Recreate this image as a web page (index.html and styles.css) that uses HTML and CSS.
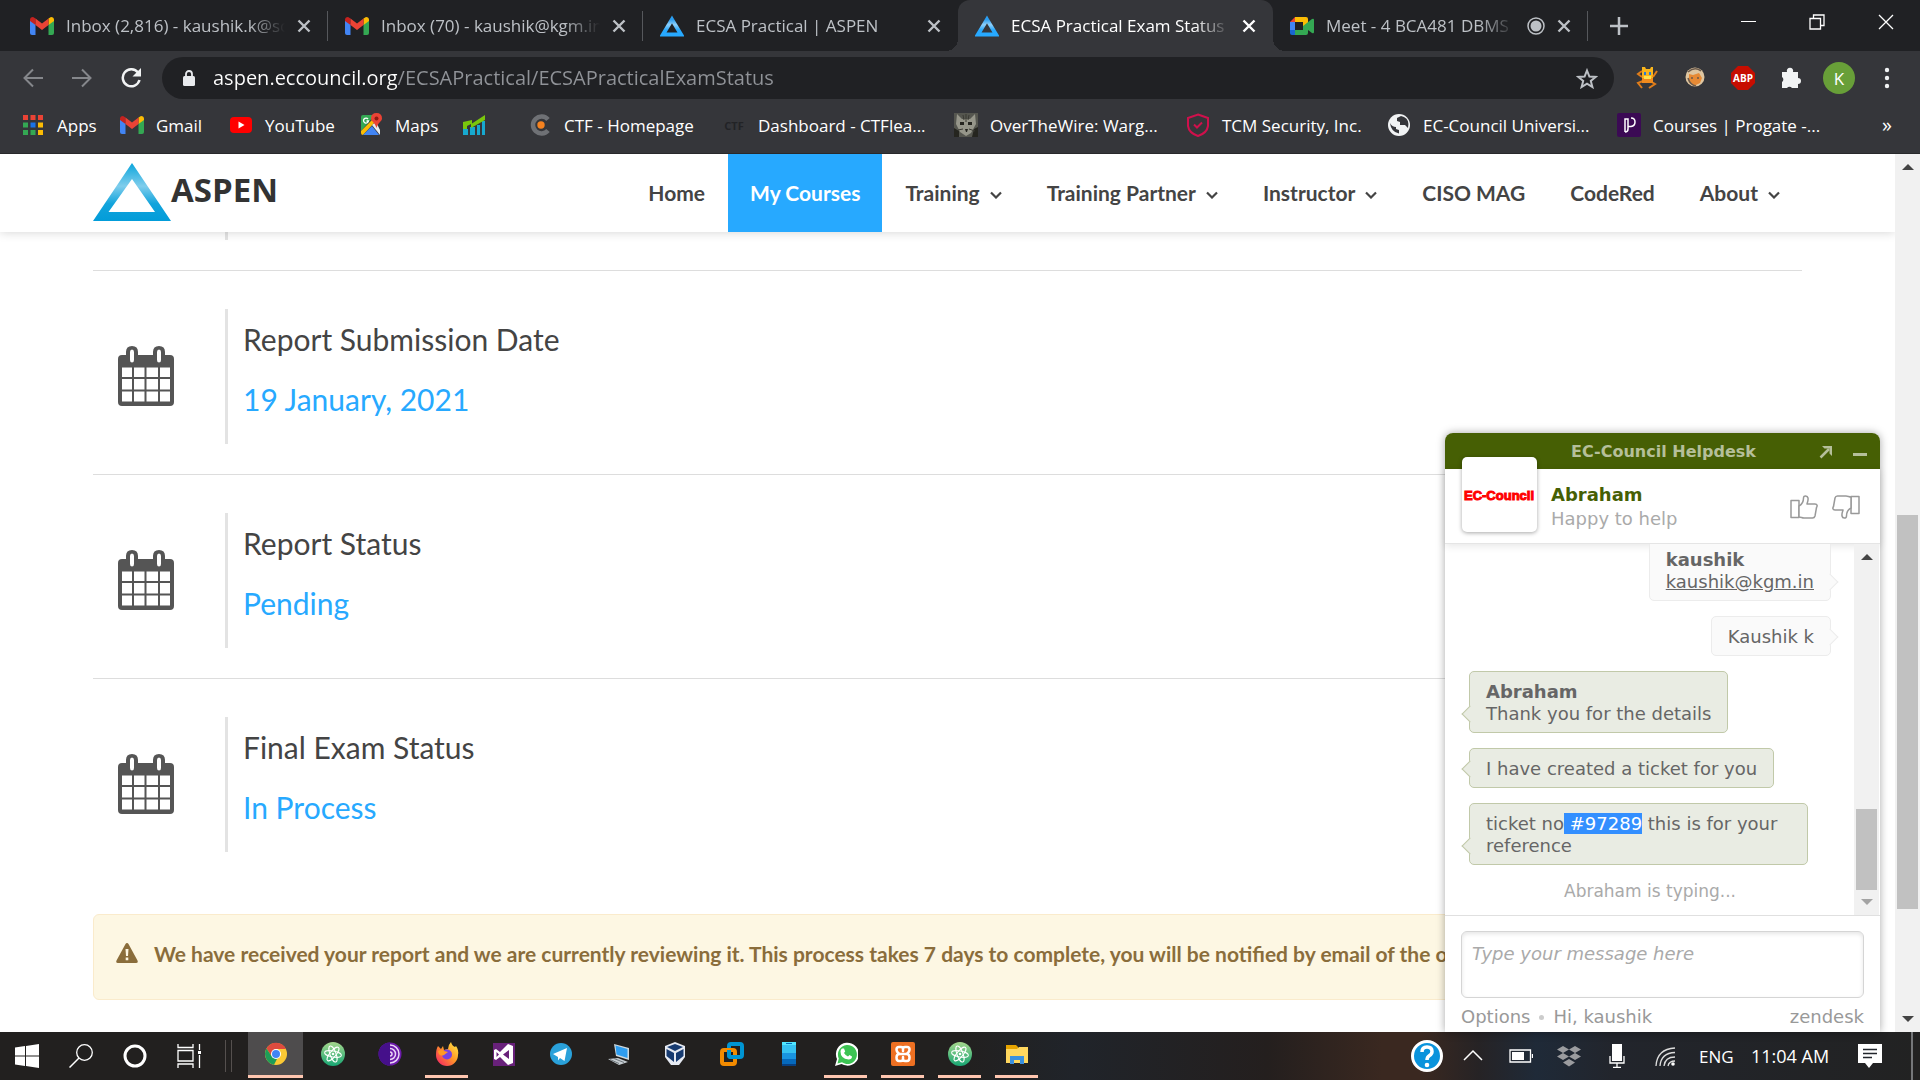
FILE: index.html
```html
<!DOCTYPE html>
<html lang="en">
<head>
<meta charset="utf-8">
<title>ECSA Practical Exam Status</title>
<link rel="stylesheet" href="styles.css">
</head>
<body>
<svg class="defs" aria-hidden="true">
  <defs>
    <linearGradient id="g-tri" x1="0" y1="0" x2="0" y2="1"><stop offset="0" stop-color="#0aa5dc"/><stop offset=".4" stop-color="#7fcdec"/><stop offset=".7" stop-color="#12a4dc"/><stop offset="1" stop-color="#029cd9"/></linearGradient>
    <linearGradient id="g-fav" x1="0" y1="0" x2="0" y2="1"><stop offset="0" stop-color="#2a9df0"/><stop offset=".35" stop-color="#8fd0fa"/><stop offset=".7" stop-color="#27a9ff"/></linearGradient>
    <linearGradient id="g-atom" x1="0" y1="0" x2="0" y2="1"><stop offset="0" stop-color="#a5d68c"/><stop offset="1" stop-color="#17a673"/></linearGradient>
    <linearGradient id="g-fox" x1="1" y1="0" x2="0" y2="1"><stop offset="0" stop-color="#fff04a"/><stop offset=".45" stop-color="#ff9a26"/><stop offset="1" stop-color="#f5156c"/></linearGradient>
    <symbol id="gmail" viewBox="0 0 24 18"><path fill="#4285f4" d="M0 3v13q0 2 2 2h3.500V7z"/><path fill="#34a853" d="M24 3v13q0 2-2 2h-3.500V7z"/><path fill="#c5221f" d="M0 3q0-3 3-3l2.500 1.500V8L0 4z"/><path fill="#fbbc04" d="M24 3q0-3-3-3l-2.500 1.500V8L24 4z"/><path fill="#ea4335" d="M5.500 1.500 12 6.500l6.500-5V8L12 13 5.500 8z"/></symbol>
    <symbol id="tri" viewBox="0 0 24 22"><path fill="none" stroke="url(#g-fav)" stroke-width="4" d="M12 4.500 21 19.500H3z"/></symbol>
    <symbol id="close" viewBox="0 0 14 14"><path fill="none" stroke="currentColor" stroke-width="2.400" d="m1.500 1.500 11 11m0-11-11 11"/></symbol>
    <symbol id="chev" viewBox="0 0 12 8"><path fill="none" stroke="currentColor" stroke-width="2.200" d="m1 1.500 5 5 5-5"/></symbol>
    <symbol id="cal" viewBox="0 0 56 60"><path fill="#555" fill-rule="evenodd" d="M4 9h4V6q0-6 6-6t6 6v3h15V6q0-6 6-6t6 6v3h5q4 0 4 4v43q0 4-4 4H4q-4 0-4-4V13q0-4 4-4zM12 6v8q0 2.500 2 2.500t2-2.500V6q0-2.500-2-2.500T12 6zm27 0v8q0 2.500 2 2.500t2-2.500V6q0-2.500-2-2.500T39 6zM4 21.500v9.500h10v-9.500zm12 0v9.500h10.500v-9.500zm12.500 0v9.500H40v-9.500zm13.500 0v9.500h10v-9.500zM4 33v10.500h10V33zm12 0v10.500h10.500V33zm12.500 0v10.500H40V33zM42 33v10.500h10V33zM4 45.500v10h10v-10zm12 0v10h10.500v-10zm12.500 0v10H40v-10zm13.500 0v10h10v-10z"/></symbol>
    <symbol id="atom" viewBox="0 0 24 24"><circle cx="12" cy="12" r="12" fill="url(#g-atom)"/><g fill="none" stroke="#fff"><ellipse cx="12" cy="12" rx="3" ry="8.500" transform="rotate(-20 12 12)"/><ellipse cx="12" cy="12" rx="3" ry="8.500" transform="rotate(40 12 12)"/><ellipse cx="12" cy="12" rx="3" ry="8.500" transform="rotate(100 12 12)"/></g><circle cx="12" cy="12" r="1.300" fill="#fff"/></symbol>
    <symbol id="thumb" viewBox="0 0 28 24"><g fill="#fff" stroke="#999" stroke-width="1.500" stroke-linejoin="round"><path d="M1 5.500h8v17H1z"/><path d="M9 11c3-1.500 4.500-4 4.500-8 0-3 4-2.500 4.500 0 .4 2.500-.5 4-1 6h8c2.500 0 2.500 2 1.500 3.500L25 21c-.4 1.400-1 2-2.500 2H14c-2 0-3-1-5-1z"/></g></symbol>
  </defs>
</svg>

<header class="tabs">
  <div class="tab"><svg class="fav short"><use href="#gmail"/></svg><span class="tab-title">Inbox (2,816) - kaushik.k@sc</span><button class="tab-close" aria-label="Close tab"><svg><use href="#close"/></svg></button></div>
  <div class="tab"><svg class="fav short"><use href="#gmail"/></svg><span class="tab-title">Inbox (70) - kaushik@kgm.in</span><button class="tab-close" aria-label="Close tab"><svg><use href="#close"/></svg></button></div>
  <div class="tab plain"><svg class="fav"><use href="#tri"/></svg><span class="tab-title">ECSA Practical | ASPEN</span><button class="tab-close" aria-label="Close tab"><svg><use href="#close"/></svg></button></div>
  <div class="tab active"><svg class="fav"><use href="#tri"/></svg><span class="tab-title">ECSA Practical Exam Status</span><button class="tab-close" aria-label="Close tab"><svg><use href="#close"/></svg></button></div>
  <div class="tab"><svg class="fav short" viewBox="0 0 24 18"><path fill="#ea4335" d="M0 5 5 0v5z"/><path fill="#4285f4" d="M0 5h5v8H0z"/><path fill="#1967d2" d="M0 13h5v5H2q-2 0-2-2z"/><path fill="#fbbc04" d="M5 0h11q2 0 2 2v6l-5 2V5H5z"/><path fill="#34a853" d="M5 13h8V9l9-7q2-1 2 1v12q0 2-2 1l-4-3v3q0 2-2 2H5z"/></svg><span class="tab-title">Meet - 4 BCA481 DBMS</span><svg class="audio" viewBox="0 0 18 18"><circle cx="9" cy="9" r="8" fill="none" stroke="#bdc1c6" stroke-width="1.500"/><circle cx="9" cy="9" r="5.500" fill="#bdc1c6"/></svg><button class="tab-close" aria-label="Close tab"><svg><use href="#close"/></svg></button></div>
  <button class="new-tab" aria-label="New tab"><svg viewBox="0 0 18 18"><path stroke="#bdc1c6" stroke-width="2.500" d="M9 0v18M0 9h18"/></svg></button>
  <div class="window-buttons">
    <button aria-label="Minimize"><svg viewBox="0 0 16 16"><path stroke="#fff" d="M1 7.500h15"/></svg></button>
    <button aria-label="Restore"><svg viewBox="0 0 16 16"><path fill="none" stroke="#fff" stroke-width="1.300" d="M1 4.500h10.500V15H1zM4.500 4.500V1H15v10.500h-3.500"/></svg></button>
    <button aria-label="Close window"><svg viewBox="0 0 16 16"><path stroke="#fff" stroke-width="1.300" d="m1 1 14 14m0-14L1 15"/></svg></button>
  </div>
</header>

<div class="toolbar">
  <button class="nav-btn" aria-label="Back"><svg viewBox="0 0 22 20"><path fill="none" stroke="#85878b" stroke-width="2" d="M21 10H3m8-8.500L2.500 10l8.500 8.500"/></svg></button>
  <button class="nav-btn" aria-label="Forward"><svg viewBox="0 0 22 20"><path fill="none" stroke="#85878b" stroke-width="2" d="M1 10h18m-8-8.500 8.500 8.500-8.500 8.500"/></svg></button>
  <button class="nav-btn" aria-label="Reload"><svg viewBox="0 0 22 20"><path fill="none" stroke="#f1f3f4" stroke-width="2.500" d="M18 4.500A8.500 8.500 0 1 0 19.500 12"/><path fill="#f1f3f4" d="M21 0v8.500h-8.500z"/></svg></button>
  <div class="omnibox">
    <svg class="lock" viewBox="0 0 12 16"><rect y="6" width="12" height="10" rx="1.500" fill="#e8eaed"/><path fill="none" stroke="#e8eaed" stroke-width="1.800" d="M3 7V4a3 3 0 0 1 6 0v3"/></svg>
    <input class="url" aria-label="Address" value="aspen.eccouncil.org/ECSAPractical/ECSAPracticalExamStatus">
    <button aria-label="Bookmark this page"><svg class="star" viewBox="0 0 22 21"><path fill="none" stroke="#bdc1c6" stroke-width="2" d="m11 2.500 2.400 6 6.300.4-4.900 4 1.600 6.100-5.400-3.400L5.600 19l1.600-6.100-4.900-4 6.300-.4z"/></svg></button>
  </div>
  <div class="extensions">
    <button aria-label="Cat extension"><svg viewBox="0 0 24 24"><path fill="#f9b51c" d="M7 1h3l1 2h4l1-2h2v12H7z"/><path fill="none" stroke="#e07d1a" stroke-width="2" d="M7 5 3 8l4 3m11 0 4-6M8 15l-5 2 4 5m8-7 5 3-6 4"/><path fill="#f08a1d" d="M7 12h11v5H7z"/><path fill="#2b7bd1" d="M9 6h2v3H9zm5 0h2v3h-2z"/><path fill="#ffe14d" d="M9 10h7v3H9z"/></svg></button>
    <button aria-label="Cookie extension"><svg viewBox="0 0 24 24"><circle cx="12" cy="11" r="9.500" fill="#dfc6a0"/><path fill="#e68a35" d="m6 8 4 1 6-2 3 5-2 5-6 3-5-4z"/><path fill="none" stroke="#6b5a4b" stroke-width="1.500" d="M5 6q7-6 13-1M5 12q2 7 8 8m-5-8h2m4 0h2"/></svg></button>
    <button aria-label="Adblock Plus"><svg class="abp" viewBox="0 0 24 24"><path fill="#c70d00" d="M7 0h10l7 7v10l-7 7H7l-7-7V7z"/><text x="12" y="16" text-anchor="middle">ABP</text></svg></button>
    <button aria-label="Extensions"><svg viewBox="0 0 24 24"><path fill="#f1f3f4" d="M3 6h5a3.200 3.200 0 1 1 6 0h5v6a3 3 0 1 1 0 6v4h-6a3 3 0 0 0-5 0H3v-6a3 3 0 0 0 0-5z"/></svg></button>
    <button class="avatar" aria-label="Profile">K</button>
    <button aria-label="Menu"><svg viewBox="0 0 24 24"><g fill="#f1f3f4"><circle cx="12" cy="4" r="2.200"/><circle cx="12" cy="12" r="2.200"/><circle cx="12" cy="20" r="2.200"/></g></svg></button>
  </div>
</div>

<nav class="bookmarks" aria-label="Bookmarks">
  <a href="#"><svg viewBox="0 0 24 24"><path fill="#ea4335" d="M2 2h5v5H2zm7.500 0h5v5h-5zM17 2h5v5h-5z"/><path fill="#34a853" d="M2 9.500h5v5H2zM2 17h5v5H2zm7.500 0h5v5h-5z"/><path fill="#1a73e8" d="M9.500 9.500h5v5h-5z"/><path fill="#fbbc04" d="M17 9.500h5v5h-5zm0 7.500h5v5h-5z"/></svg>Apps</a>
  <a href="#"><svg><use href="#gmail" y="3" height="18" width="24"/></svg>Gmail</a>
  <a href="#"><svg viewBox="0 0 24 24"><rect y="4" x="1" width="22" height="16" rx="4" fill="red"/><path fill="#fff" d="M9.500 8.500v7l6-3.500z"/></svg>YouTube</a>
  <a href="#"><svg viewBox="0 0 24 24"><path fill="#34a853" d="M2 4q0-2 2-2h12L2 18z"/><path fill="#fbbc04" d="m2 18 14-14v5L4 22q-2 0-2-2z"/><path fill="#4285f4" d="m4 22 9-9 7 9z"/><path fill="#e8eaed" d="m13 12 4-3 4 8v5z"/><path fill="#ea4335" d="M17.500 0Q23 0 23 5.500c0 3-4 4-5.500 9.500C16 9.500 12 8.500 12 5.500Q12 0 17.500 0z"/><circle cx="17.500" cy="5.500" r="2" fill="#8e1b12"/><path fill="none" stroke="#fff" stroke-width="1.300" d="M9 6a2.500 2.500 0 1 0 .5 2H7.500"/></svg>Maps</a>
  <a href="#" aria-label="Analytics"><svg viewBox="0 0 24 24"><path fill="#17a9cf" d="M1 16h5v6H1zm7-2h5v8H8zm7-2h3v10h-3zm5-4h3v14h-3z"/><path fill="#7ac70c" d="M1 9l9-2v3.500L23 2v5L9 15v-4l-4 2v3H1z"/></svg></a>
  <a href="#"><svg viewBox="0 0 24 24"><path fill="none" stroke="#6f7175" stroke-width="4.500" d="M20 6.500a8.500 8.500 0 1 0 0 11"/><circle cx="13" cy="12" r="3.700" fill="#f5821f"/></svg>CTF - Homepage</a>
  <a href="#"><svg class="ctf" viewBox="0 0 24 24"><text x="12" y="17" text-anchor="middle">CTF</text></svg>Dashboard - CTFlea...</a>
  <a href="#"><svg viewBox="0 0 24 24"><path fill="#55564f" d="M0 0h24v24H0z"/><path fill="#96968a" d="m3 1 5 5h8l5-5 1 10-5 9-5 3-6-4-4-8z"/><path fill="#25251f" d="M6 9h4v3H6zm8 0h4v3h-4zm-3 7h3l-1 3h-1zM0 15l5 3v6H0zm20 1 4-2v10h-6z"/><path stroke="#3a3a33" d="M12 1v8M9 2l1 5m5-5-1 5M4 17l5-1m6 0 6 2"/></svg>OverTheWire: Warg...</a>
  <a href="#"><svg viewBox="0 0 24 24"><path fill="none" stroke="#d0104c" stroke-width="2" d="M12 1.500 22 5v8q-1 7-10 10Q3 20 2 13V5z"/><path fill="none" stroke="#d0104c" stroke-width="2" d="m8 11.500 3 3 5-5"/></svg>TCM Security, Inc.</a>
  <a href="#"><svg viewBox="0 0 24 24"><circle cx="12" cy="12" r="11" fill="#f1f3f4"/><path fill="#35363a" d="M3 10q2 4 6 4v2l3 1v3.500Q4 19 3 10zm11-7-4 2v3l3 1v3h5l3 3q2-8-4-11z"/></svg>EC-Council Universi...</a>
  <a href="#"><svg viewBox="0 0 24 24"><rect width="24" height="24" rx="2" fill="#3b0a54"/><path fill="none" stroke="#fff" stroke-width="1.500" d="M8 19V6h3v10q0 3-3 3m6-14q4 0 4 4t-4 4.500h-3"/></svg>Courses | Progate -...</a>
  <button class="more" aria-label="More bookmarks">»</button>
</nav>

<div class="page">
  <div class="view">
    <header class="site-header">
      <a class="brand" href="#"><svg viewBox="0 0 78 58"><path fill="url(#g-tri)" fill-rule="evenodd" d="M39 0 78 58H0zm0 16L15.500 49h46.500z"/></svg>ASPEN</a>
      <nav class="site-nav">
        <a href="#">Home</a>
        <a href="#" class="current">My Courses</a>
        <a href="#">Training<svg><use href="#chev"/></svg></a>
        <a href="#">Training Partner<svg><use href="#chev"/></svg></a>
        <a href="#">Instructor<svg><use href="#chev"/></svg></a>
        <a href="#">CISO MAG</a>
        <a href="#">CodeRed</a>
        <a href="#">About<svg><use href="#chev"/></svg></a>
      </nav>
    </header>
    <main class="content">
      <div class="row-tail"></div>
      <section class="status"><svg><use href="#cal"/></svg><div class="status-text"><h2>Report Submission Date</h2><p>19 January, 2021</p></div></section>
      <section class="status"><svg><use href="#cal"/></svg><div class="status-text"><h2>Report Status</h2><p>Pending</p></div></section>
      <section class="status"><svg><use href="#cal"/></svg><div class="status-text"><h2>Final Exam Status</h2><p>In Process</p></div></section>
      <div class="alert" role="alert"><svg viewBox="0 0 22 20"><path fill="#8a6d3b" fill-rule="evenodd" d="M11 0q1 0 1.500 1l9 16.500q1 2.500-1.500 2.500H2Q-.500 20 .500 17.500L9.500 1Q10 0 11 0zM9.500 6l.5 7h2l.5-7zm.2 8.500v2.800h2.600v-2.800z"/></svg>We have received your report and we are currently reviewing it. This process takes 7 days to complete, you will be notified by email of the outcome.</div>
    </main>
  </div>
  <div class="scrollbar page-scroll"><i class="arrow up"></i><i class="thumb"></i><i class="arrow down"></i></div>

  <aside class="chat" aria-label="EC-Council Helpdesk">
    <header class="chat-head"><span>EC-Council Helpdesk</span>
      <button aria-label="Pop out"><svg viewBox="0 0 14 14"><path fill="none" stroke="#b5bf9a" stroke-width="2.500" d="M1.500 12.500 10 4"/><path fill="#b5bf9a" d="M3 1h10v10l-2.500-2.500V3.500H5.500z"/></svg></button>
      <button aria-label="Minimize chat"><svg viewBox="0 0 14 14"><path fill="#b5bf9a" d="M0 8h14v3H0z"/></svg></button>
    </header>
    <div class="agent">
      <div class="agent-logo"><svg class="logo" viewBox="0 0 75 75"><text x="37" y="43" text-anchor="middle">EC-Council</text></svg></div>
      <div class="agent-name"><strong>Abraham</strong><span>Happy to help</span></div>
      <button aria-label="Good"><svg class="rate"><use href="#thumb"/></svg></button>
      <button aria-label="Bad" class="bad"><svg class="rate"><use href="#thumb"/></svg></button>
    </div>
    <div class="log">
      <div class="messages">
        <div class="msg me"><strong>kaushik</strong><a href="#">kaushik@kgm.in</a></div>
        <div class="msg me">Kaushik k</div>
        <div class="msg"><strong>Abraham</strong>Thank you for the details</div>
        <div class="msg">I have created a ticket for you</div>
        <div class="msg">ticket no<mark> #97289</mark> this is for your reference</div>
        <p class="typing">Abraham is typing...</p>
      </div>
      <div class="scrollbar log-scroll"><i class="arrow up"></i><i class="thumb"></i><i class="arrow down faint"></i></div>
    </div>
    <div class="compose">
      <textarea aria-label="Message" placeholder="Type your message here"></textarea>
      <div class="chat-foot"><a href="#">Options</a><i class="dot"></i><a href="#">Hi, kaushik</a><a href="#" class="zen">zendesk</a></div>
    </div>
  </aside>
</div>

<footer class="taskbar">
  <div class="system">
    <button aria-label="Start"><svg viewBox="0 0 24 24"><path fill="#fff" d="M0 3.500 10 2v9.500H0zM11 2l13-2v11.500H11zM0 12.500h10V22L0 20.500zm11 0h13V24l-13-2z"/></svg></button>
    <button aria-label="Search"><svg viewBox="0 0 24 24"><circle cx="15.500" cy="8.500" r="7.800" fill="none" stroke="#fff" stroke-width="1.300"/><path stroke="#fff" stroke-width="1.500" d="M10 14 .500 23.500"/></svg></button>
    <button aria-label="Cortana"><svg viewBox="0 0 24 24"><circle cx="12" cy="12" r="10" fill="none" stroke="#fff" stroke-width="3"/></svg></button>
    <button aria-label="Task View"><svg viewBox="0 0 24 24"><path fill="none" stroke="#fff" stroke-width="1.300" d="M1 0v3.500h15V0M1 6.500h15v10.500H1zM1 24v-4h15v4M22.500 0v6m0 5v13"/><path fill="#fff" d="M21 7h3v3h-3z"/></svg></button>
  </div>
  <div class="apps">
    <button class="open focus" aria-label="Chrome"><svg viewBox="0 0 24 24"><circle cx="12" cy="12" r="11" fill="#fbc934"/><path fill="#dd4b3e" d="M2.500 6.500A11 11 0 0 1 22 7H12L7.500 14z"/><path fill="#1e9d58" d="M2.500 6.500 7.500 14l6 2L10 22.800A11 11 0 0 1 2.500 6.500z"/><circle cx="12" cy="12" r="5" fill="#fff"/><circle cx="12" cy="12" r="4" fill="#4285f4"/></svg></button>
    <button aria-label="Atom"><svg><use href="#atom"/></svg></button>
    <button aria-label="Tor Browser"><svg viewBox="0 0 24 24"><circle cx="12" cy="12" r="11.500" fill="#6d1bab"/><path fill="#45108a" d="M12 .500a11.500 11.500 0 0 0 0 23z"/><path fill="none" stroke="#e9d5f5" stroke-width="1.500" d="M12 3a9 9 0 0 1 0 18m0-14.500a5.500 5.500 0 0 1 0 11m0-7.500a2 2 0 0 1 0 4"/></svg></button>
    <button class="open" aria-label="Firefox"><svg viewBox="0 0 24 24"><path fill="url(#g-fox)" d="M3 4l3 3 2-3 1 4 4-1q0-4 3-7 1 4 4 5l1-1q3 4 2 9a11 11 0 0 1-22 0Q1 7 3 4z"/><circle cx="12" cy="12.500" r="5" fill="#7542e5"/><path fill="#ff9a26" d="M3 9q4-2 6 0l4 1-4 3q-5 2-6-4z"/></svg></button>
    <button aria-label="Visual Studio"><svg viewBox="0 0 24 24"><path fill="#68217a" d="M1 1h22v23H1z"/><path fill="#fff" fill-rule="evenodd" d="M2 8l2-1 4 3 8-8 5 2v17l-5 2-8-8-4 3-2-1zm2.500 2v5L7 12.500zM17 8l-6 4.500 6 4.500z"/></svg></button>
    <button aria-label="Telegram"><svg viewBox="0 0 24 24"><circle cx="12" cy="12" r="11" fill="#2aa1da"/><path fill="#fff" d="m4 12 14-6-2.500 13-4.500-3-2 2.500V15z"/></svg></button>
    <button aria-label="Remote Desktop"><svg viewBox="0 0 24 24"><path fill="#cfd8dc" d="m8 2 15 4v12L10 14z"/><path fill="#2e9df0" d="m9.500 3.500 12 3.500v9l-11-3.500z"/><path fill="#c5ccd1" d="m2 17 10-1 10 4-9 3z"/><path stroke="#6f777c" d="m4 17.500 9 4m-5-5 10 4"/></svg></button>
    <button aria-label="VirtualBox"><svg viewBox="0 0 24 24"><path fill="#e6eaf2" d="m12 0 10 4v11l-6 8H8l-6-8V4z"/><path fill="#163a70" d="m12 2 8 3-8 4-8-4zM3.500 7 11 11v9l-7.500-6zm17 0L13 11v9l7.500-6z"/></svg></button>
    <button aria-label="VMware"><svg viewBox="0 0 24 24"><rect x="9" y="2" width="13" height="13" rx="2" fill="none" stroke="#0095d3" stroke-width="4"/><rect x="2" y="8" width="13" height="14" rx="2" fill="none" stroke="#f38b00" stroke-width="4"/><path fill="none" stroke="#0095d3" stroke-width="4" d="M9 8v5q0 2 2 2h6"/></svg></button>
    <button aria-label="Your Phone"><svg viewBox="0 0 24 24"><path fill="#35c1f1" d="M5 0h14v24H5z"/><path fill="#50e6ff" d="M5 0h14v3H5z"/><path fill="#1994e0" d="M5 11h14v13H5z"/><path fill="#0669bc" d="M5 17h14v7H5z"/><path fill="#083f80" d="M5 22h14v2H5z"/><path stroke="#0669bc" d="M9 1.500h6"/></svg></button>
    <button class="open" aria-label="WhatsApp"><svg viewBox="0 0 24 24"><path fill="#fff" d="m1 24 2-7A11.500 11.500 0 1 1 7.500 22z"/><path fill="#3cc353" d="m3.500 21.500 1.300-5A9.500 9.500 0 1 1 8 20.300z"/><path fill="#fff" d="M8 6.500h2l1.200 3-1.200 1.500q1.500 2.500 4 3.500l1.500-1.500 2.500 1.500q0 3-3.500 3-8-1-8-8 0-2 1.500-3z"/></svg></button>
    <button class="open" aria-label="XAMPP"><svg viewBox="0 0 24 24"><rect width="24" height="24" rx="2" fill="#ee7022"/><path fill="none" stroke="#fff" stroke-width="2.500" stroke-linejoin="round" d="M12 9V7q0-2-2-2H8Q5.500 5 5.500 7.500t3 4.500q-3 0-3 3.500T8 19h2q2 0 2-2v-2 2q0 2 2 2h2q2.500 0 2.500-3.500t-3-3.500q3-2 3-4.500T16 5h-2q-2 0-2 2zM8.500 12h7"/></svg></button>
    <button class="open" aria-label="Atom window"><svg><use href="#atom"/></svg></button>
    <button class="open" aria-label="File Explorer"><svg viewBox="0 0 24 24"><path fill="#e6a400" d="M1 3h10l2 2v5H1z"/><path fill="#ffd75e" d="M1 7h11l2-2h9v16H1z"/><path fill="#3b91de" d="M5 22v-8h14v8h-4v-4H9v4z"/></svg></button>
  </div>
  <div class="tray">
    <button aria-label="Help" class="help"><svg viewBox="0 0 32 32"><circle cx="16" cy="16" r="14.500" fill="#0a93dc" stroke="#fff" stroke-width="3"/><path fill="none" stroke="#fff" stroke-width="3.500" d="M11 12q0-5 5-5t5 4.500q0 2.500-2.500 4T16 20"/><circle cx="16" cy="25" r="2.300" fill="#fff"/></svg></button>
    <button aria-label="Show hidden icons"><svg viewBox="0 0 24 24"><path fill="none" stroke="#fff" stroke-width="1.500" d="m3 16 9-9 9 9"/></svg></button>
    <button aria-label="Battery"><svg viewBox="0 0 24 24"><path fill="none" stroke="#fff" stroke-width="1.300" d="M1 6h20.500v12H1zM23.500 10v4"/><path fill="#fff" d="M3 8h12v8H3z"/></svg></button>
    <button aria-label="Dropbox"><svg viewBox="0 0 24 24"><path fill="#9b9c9f" d="m6 2 6 3.500L6 9 0 5.500zm12 0 6 3.500L18 9l-6-3.500zM6 9l6 3.500L6 16l-6-3.500zm12 0 6 3.500-6 3.500-6-3.500zm-6 6 6 3.500-6 4-6-4z"/></svg></button>
    <button aria-label="Microphone"><svg viewBox="0 0 24 24"><path fill="#fff" d="M7 0h10v17H7z"/><path fill="none" stroke="#fff" stroke-width="1.300" d="M5 12v7h14v-7m-7 7v4m-4 .3h8"/></svg></button>
    <button aria-label="Network"><svg viewBox="0 0 24 24"><g fill="none" stroke="#ddd" stroke-width="1.300"><path d="M3 22Q4 5 22 4M7 22Q8 9 22 8.500M11 22q1-9 11-9M15 22q1-5 7-5"/></g><circle cx="20" cy="20" r="1.800" fill="#fff"/></svg></button>
    <span class="lang">ENG</span>
    <time>11:04 AM</time>
    <button aria-label="Notifications" class="notes"><svg viewBox="0 0 24 24"><path fill="#fff" d="M0 0h24v19H15l-4 5-4-5H0z"/><path stroke="#22262c" stroke-width="1.300" d="M5 5.500h14M5 9.500h14m-14 4h9"/></svg></button>
  </div>
</footer>
</body>
</html>
```

FILE: styles.css
```css
* { box-sizing: border-box; }
body {
  margin: 0;
  height: 100vh;
  display: flex;
  flex-direction: column;
  overflow: hidden;
  background: #fff;
  font-family: "Open Sans", "Noto Sans", sans-serif;
  font-size: 17px;
}
button { border: 0; padding: 0; background: none; color: inherit; font: inherit; display: flex; align-items: center; justify-content: center; }
a { color: inherit; text-decoration: none; }
svg { display: block; flex: none; }
.defs { position: absolute; width: 0; height: 0; }

/* Tab strip */
.tabs { height: 51px; flex: none; display: flex; align-items: center; padding-left: 13px; background: #202124; color: #bdc1c6; }
.tab { flex: 0 1 315px; min-width: 0; height: 30px; display: flex; align-items: center; gap: 12px; padding: 0 16px 0 17px; border-right: 1px solid #56585c; }
.fav { width: 24px; height: 22px; }
.fav.short { height: 18px; }
.tab-title { flex: 1; min-width: 0; overflow: hidden; white-space: nowrap; line-height: 26px; -webkit-mask-image: linear-gradient(90deg, #000 calc(100% - 36px), transparent); mask-image: linear-gradient(90deg, #000 calc(100% - 36px), transparent); }
.tab-close svg { width: 14px; height: 14px; }
.audio { width: 18px; height: 18px; }
.tab.plain { border-color: transparent; }
.tab.active { position: relative; height: 51px; background: #35363a; color: #fff; border-color: transparent; border-radius: 12px 12px 0 0; }
.tab.active::before, .tab.active::after { content: ""; position: absolute; bottom: 0; width: 12px; height: 12px; }
.tab.active::before { left: -12px; background: radial-gradient(circle at 0 0, #202124 12px, #35363a 12px); }
.tab.active::after { right: -13px; background: radial-gradient(circle at 100% 0, #202124 12px, #35363a 12px); }
.new-tab { width: 62px; }
.new-tab svg { width: 18px; height: 18px; }
.window-buttons { margin-left: auto; display: flex; padding-bottom: 8px; }
.window-buttons button { width: 69px; }
.window-buttons svg { width: 16px; height: 16px; }

/* Toolbar */
.toolbar { height: 54px; flex: none; display: flex; align-items: center; padding: 0 9px 0 8px; background: #35363a; color: #fff; }
.nav-btn { width: 49px; }
.nav-btn svg { width: 22px; height: 20px; }
.omnibox { flex: 1; height: 42px; margin-left: 7px; padding: 0 16px 0 21px; display: flex; align-items: center; gap: 18px; border-radius: 21px; background: #202124; }
.lock { width: 12px; height: 16px; }
.url { flex: 1; min-width: 0; height: 30px; padding: 0; border: 0; outline: 0; font: 20px/30px "Open Sans", "Noto Sans", sans-serif; color: transparent; background: linear-gradient(90deg, #fff 184px, #909398 184px); -webkit-background-clip: text; background-clip: text; }
.star { width: 22px; height: 21px; }
.extensions { display: flex; margin-left: 9px; }
.extensions button { width: 48px; height: 32px; }
.extensions svg { width: 24px; height: 24px; }
.abp text { font: bold 10px "Open Sans", sans-serif; fill: #fff; }
.extensions .avatar { width: 32px; margin: 0 8px; border-radius: 50%; background: #689f38; }

/* Bookmarks */
.bookmarks { height: 49px; flex: none; display: grid; grid-template-columns: 99px 109px 130px 103px 66px 194px 232px 232px 201px 230px 240px 1fr; align-items: center; padding: 0 28px 8px 21px; background: #35363a; border-bottom: 1px solid #28292b; color: #fff; }
.bookmarks a { display: flex; align-items: center; gap: 12px; white-space: nowrap; }
.bookmarks svg { width: 24px; height: 24px; }
.ctf text { font: bold 11px "Open Sans", sans-serif; fill: #222326; }
.more { justify-self: end; font-size: 20px; line-height: 24px; }

/* Page */
.page { flex: 1; min-height: 0; position: relative; display: flex; font-family: Lato, sans-serif; color: #444; }
.view { flex: 1; min-width: 0; overflow: hidden; }
.site-header { height: 78px; display: flex; align-items: center; justify-content: space-between; padding: 0 93px; position: relative; background: #fff; box-shadow: 0 0 10px rgba(0, 0, 0, .18); }
.brand { display: flex; padding-bottom: 2px; font: bold 33px/54px "Open Sans", sans-serif; color: #333; }
.brand svg { width: 78px; height: 58px; }
.site-nav { display: flex; gap: 1px; font-size: 21px; font-weight: bold; }
.site-nav a { display: flex; align-items: center; gap: 10px; height: 78px; padding: 0 22px 2px; }
.site-nav svg { width: 12px; height: 8px; margin-top: 6px; }
.site-nav .current { background: #27a9ff; color: #fff; }
.content { padding: 0 93px; }
.row-tail { height: 8px; margin: 0 0 30px 132px; border-left: 3px solid #e3e3e3; }
.status { display: flex; align-items: center; padding: 38px 0 30px 25px; border-top: 1px solid #ddd; }
.status > svg { width: 56px; height: 60px; margin-bottom: 2px; }
.status-text { height: 135px; margin-left: 51px; padding-left: 15px; border-left: 3px solid #e3e3e3; font-size: 30px; line-height: 60px; }
.status h2, .status p { margin: 0; font: inherit; }
.status p { color: #27a9ff; }
.alert { height: 86px; margin-top: 32px; padding: 0 22px 8px; display: flex; align-items: center; gap: 16px; border: 1px solid #faebcc; border-radius: 6px; background: #fdf7e3; color: #8a6d3b; font-size: 21px; font-weight: bold; white-space: nowrap; }
.alert svg { width: 22px; height: 20px; }

/* Scrollbars */
.scrollbar { width: 25px; flex: none; display: flex; flex-direction: column; align-items: center; padding: 10px 0; background: #f1f1f1; }
.scrollbar .thumb { width: 21px; background: #c1c1c1; }
.arrow { border: 6px solid transparent; }
.arrow.up { border-top: 0; border-bottom-color: #444; }
.arrow.down { border-bottom: 0; border-top-color: #444; margin-top: auto; }
.arrow.faint { border-top-color: #a3a3a3; }
.page-scroll .up { margin-bottom: 345px; }
.page-scroll .thumb { height: 394px; }

/* Chat window, over the page */
.chat { position: absolute; right: 40px; bottom: 0; width: 435px; display: flex; flex-direction: column; border-radius: 8px 8px 0 0; background: #fff; box-shadow: 0 0 8px rgba(0, 0, 0, .35); font: 18px/22px "DejaVu Sans", sans-serif; color: #666; }
.chat-head { height: 36px; display: flex; align-items: center; gap: 20px; padding: 2px 13px 0; border-radius: 8px 8px 0 0; background: #465f04; color: #b5bf9a; font-size: 16px; font-weight: bold; }
.chat-head span { flex: 1; padding-left: 70px; text-align: center; }
.chat-head svg { width: 14px; height: 14px; }
.agent { height: 75px; display: flex; align-items: center; gap: 14px; padding: 2px 20px 0 17px; border-bottom: 1px solid #e5e5e5; box-shadow: 0 2px 8px rgba(0, 0, 0, .1); }
.agent-logo { align-self: flex-start; margin-top: -14px; border-radius: 5px; background: #fff; box-shadow: 0 1px 4px rgba(0, 0, 0, .35); }
.logo { width: 75px; height: 75px; }
.logo text { font: bold 13px "Liberation Sans", sans-serif; fill: #f00; stroke: #f00; }
.agent-name { flex: 1; display: flex; flex-direction: column; line-height: 24px; color: #aaa; }
.agent-name strong { color: #465f04; }
.rate { width: 28px; height: 24px; }
.bad svg { transform: rotate(180deg); }
.log { height: 372px; display: flex; padding-right: 1px; border-bottom: 1px solid #e0e0e0; }
.messages { flex: 1; display: flex; flex-direction: column; justify-content: flex-end; align-items: flex-start; gap: 15px; padding: 0 23px 13px 24px; overflow: hidden; }
.msg { position: relative; max-width: 339px; padding: 9px 16px 7px; border: 1px solid #c1c9a9; border-radius: 5px; background: #e9ece3; }
.msg strong { display: block; }
.msg::before { content: ""; position: absolute; left: -6px; bottom: 12px; width: 11px; height: 11px; border: solid #c1c9a9; border-width: 0 0 1px 1px; background: #e9ece3; transform: rotate(45deg); }
.msg.me { align-self: flex-end; border-color: #ececec; background: #fafafa; }
.msg.me::before { left: auto; right: -6px; border-color: #ececec; border-width: 1px 1px 0 0; background: #fafafa; }
.msg a { text-decoration: underline; }
.msg mark { background: #338fff; color: #fff; }
.typing { align-self: center; margin: 0; font-size: 17px; color: #aaa; }
.log-scroll .thumb { width: 21px; height: 81px; }
.log-scroll .up { margin-bottom: auto; }
.log-scroll .down { margin-top: 9px; }
.compose { padding: 15px 16px 4px; }
.compose textarea { display: block; width: 100%; height: 67px; padding: 11px 10px; resize: none; border: 1px solid #d5d5d5; border-radius: 6px; box-shadow: inset 0 2px 4px rgba(0, 0, 0, .1); font: italic 18px/22px "DejaVu Sans", sans-serif; }
.compose textarea::placeholder { color: #aaa; }
.chat-foot { display: flex; align-items: center; gap: 9px; padding-top: 8px; color: #999; font-size: 18px; }
.dot { width: 5px; height: 5px; border-radius: 50%; background: #ccc; }
.zen { margin-left: auto; }

/* Taskbar */
.taskbar { height: 48px; flex: none; display: flex; background: linear-gradient(90deg, #22201f 0 50%, #20242a 56%, #241f1e 66%, #3a2820 72%, #3a2820 74%, #262325 77%, #1f2a38 80%, #22252c 84%, #222 100%); color: #fff; }
.taskbar svg { width: 24px; height: 24px; }
.system { display: flex; margin-right: 8px; }
.system button { width: 54px; }
.apps { display: flex; gap: 2px; padding-left: 24px; position: relative; }
.apps::before { content: ""; width: 5px; height: 32px; position: absolute; left: 1px; top: 8px; border: solid #55504e; border-width: 0 1px; }
.apps button { width: 55px; border-bottom: 3px solid transparent; margin-bottom: 2px; }
.apps .open { background: linear-gradient(#ffc6b0, #ffc6b0) bottom / 43px 3px no-repeat border-box; }
.apps .focus { background: linear-gradient(#ffc6b0, #ffc6b0) bottom / 100% 3px no-repeat border-box, #4e4c4d; }
.tray { margin-left: auto; display: flex; align-items: center; padding-right: 7px; }
.tray button { width: 48px; }
.tray .help { width: 44px; }
.tray .help svg { width: 32px; height: 32px; }
.lang { width: 50px; padding-left: 10px; }
.tray time { width: 90px; padding-left: 12px; white-space: nowrap; font-size: 18px; }
.tray .notes { width: 84px; height: 48px; border-right: 2px solid #75777a; }
```
